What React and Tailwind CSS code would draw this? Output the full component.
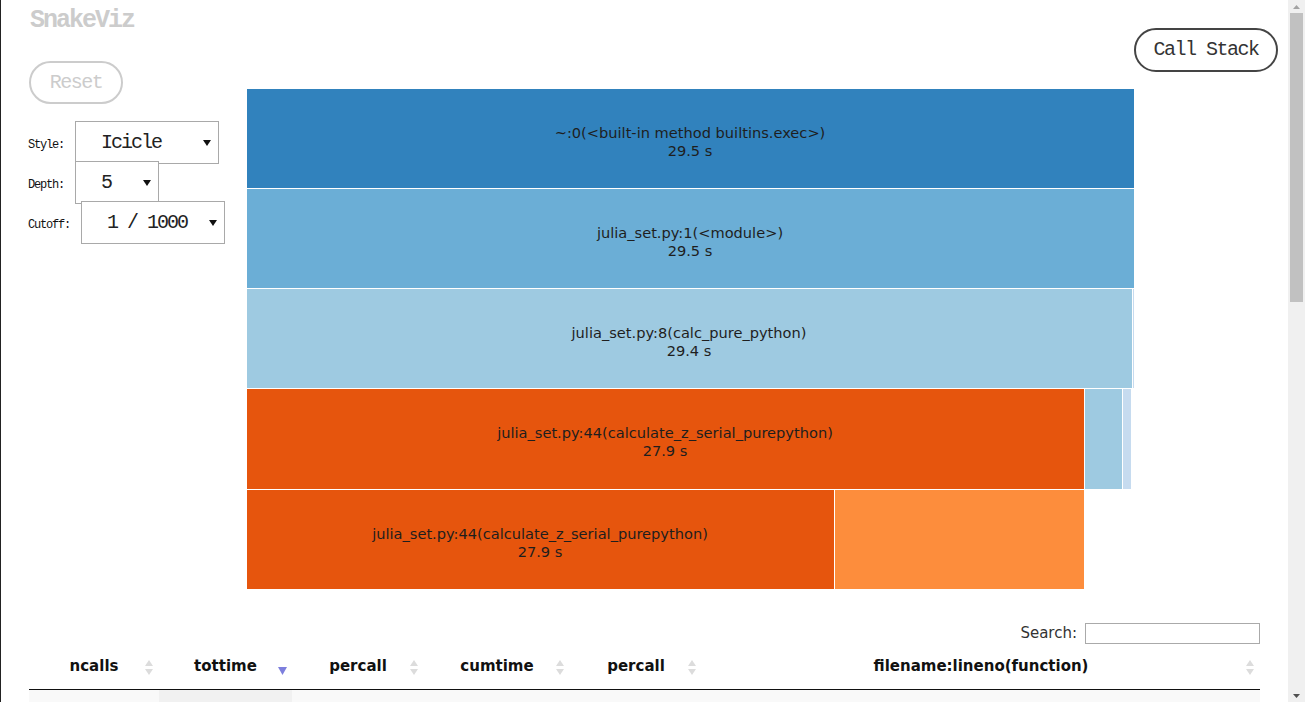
import React from 'react';

const MONO = { fontFamily: '"Liberation Mono", "DejaVu Sans Mono", monospace' };
const SANS = { fontFamily: '"DejaVu Sans", Verdana, sans-serif' };

// icicle blocks, coordinates relative to the chart origin
const BLOCKS = [
  { x: 0, y: 0, w: 888, h: 100, fill: '#3182bd', label: '~:0(<built-in method builtins.exec>)', time: '29.5 s' },
  { x: 0, y: 100, w: 888, h: 100, fill: '#6baed6', label: 'julia_set.py:1(<module>)', time: '29.5 s' },
  { x: 0, y: 200, w: 886, h: 100, fill: '#9ecae1', label: 'julia_set.py:8(calc_pure_python)', time: '29.4 s' },
  { x: 886, y: 200, w: 2, h: 100, fill: '#c6dbef' },
  { x: 0, y: 300, w: 838, h: 101, fill: '#e6550d', label: 'julia_set.py:44(calculate_z_serial_purepython)', time: '27.9 s' },
  { x: 838, y: 300, w: 38, h: 101, fill: '#9ecae1' },
  { x: 876, y: 300, w: 9, h: 101, fill: '#c6dbef' },
  { x: 0, y: 401, w: 588, h: 100, fill: '#e6550d', label: 'julia_set.py:44(calculate_z_serial_purepython)', time: '27.9 s' },
  { x: 588, y: 401, w: 250, h: 100, fill: '#fd8d3c' },
];

const COLUMNS = [
  { name: 'ncalls', w: 'w-[130px]' },
  { name: 'tottime', w: 'w-[133px]', active: true },
  { name: 'percall', w: 'w-[132px]' },
  { name: 'cumtime', w: 'w-[146px]' },
  { name: 'percall', w: 'w-[132px]' },
  { name: 'filename:lineno(function)', w: 'flex-1' },
];

function Caret() {
  return (
    <svg width="8" height="6" viewBox="0 0 8 6" className="shrink-0">
      <path d="M0 0 L8 0 L4 6 Z" fill="#111" />
    </svg>
  );
}

function FakeSelect({ value, width }) {
  return (
    <div
      className={`${width} h-[43px] border border-[#a9a9a9] bg-white flex items-center pl-[25px] pr-[7px]`}
    >
      <span className="flex-1 text-[20px] tracking-[-2px] text-[#222]" style={MONO}>
        {value}
      </span>
      <Caret />
    </div>
  );
}

function ControlRow({ label, value, width }) {
  return (
    <div className="flex items-center -mb-[3px]">
      <span className="text-[12px] tracking-[-1.2px] text-[#111] pt-[4px] mr-[11px]" style={MONO}>
        {label}
      </span>
      <FakeSelect value={value} width={width} />
    </div>
  );
}

function SortIcon({ active }) {
  if (active) {
    return (
      <svg width="9" height="16" viewBox="0 0 9 16" className="absolute right-[5px] top-[16px]">
        <path d="M0 7 L9 7 L4.5 15 Z" fill="#7d7fdd" />
      </svg>
    );
  }
  return (
    <svg width="8" height="16" viewBox="0 0 8 16" className="absolute right-[6px] top-[16px]">
      <path d="M0 6 L4 0 L8 6 Z" fill="#dcdcdc" />
      <path d="M0 9 L8 9 L4 15 Z" fill="#dcdcdc" />
    </svg>
  );
}

function Icicle() {
  return (
    <svg width="888" height="502" viewBox="0 0 888 502" style={SANS}>
      {BLOCKS.map((b, i) => (
        <g key={i}>
          <rect x={b.x + 0.5} y={b.y + 0.5} width={b.w} height={b.h} fill={b.fill} stroke="#fff" strokeWidth="1" />
          {b.label && (
            <text textAnchor="middle" fontSize="14.6" fill="#1e1e1e">
              <tspan x={b.x + b.w / 2} y={b.y + 49.5}>{b.label}</tspan>
              <tspan x={b.x + b.w / 2} y={b.y + 67.5}>{b.time}</tspan>
            </text>
          )}
        </g>
      ))}
    </svg>
  );
}

export default function App() {
  return (
    <div className="w-[1305px] h-[702px] overflow-hidden flex bg-white border-l border-[#222]">
      <div className="flex-1 flex flex-col">
        {/* top area: controls, icicle chart, call stack button */}
        <div className="flex">
          <div className="w-[245px] pl-[27px] flex flex-col items-start">
            <div className="pt-[2px] h-[61px] pl-[2px]">
              <h1 className="text-[25px] leading-[38px] font-bold tracking-[-2px] text-[#cccccc]" style={MONO}>
                SnakeViz
              </h1>
            </div>
            <button
              className="w-[94px] h-[43px] ml-[1px] rounded-full border-2 border-[#cccccc] text-[#cccccc] text-[20px] tracking-[-1.5px] bg-white"
              style={MONO}
            >
              Reset
            </button>
            <div className="mt-[17px] flex flex-col">
              <ControlRow label="Style:" value="Icicle" width="w-[144px]" />
              <ControlRow label="Depth:" value="5" width="w-[84px]" />
              <ControlRow label="Cutoff:" value="1 / 1000" width="w-[144px]" />
            </div>
          </div>
          <div className="pt-[88px]">
            <Icicle />
          </div>
          <div className="pt-[28px]">
            <button
              className="w-[144px] h-[44px] rounded-full border-2 border-[#444] text-[#333] text-[20px] tracking-[-1.5px] bg-white"
              style={MONO}
            >
              Call Stack
            </button>
          </div>
        </div>

        {/* stats table */}
        <div className="mt-[33px] pl-[28px] pr-[28px]" style={SANS}>
          <div className="flex justify-end items-center gap-[8px] h-[21px]">
            <span className="text-[15px] text-[#333]">Search:</span>
            <div className="w-[175px] h-[21px] border border-[#aaa] bg-white" />
          </div>
          <div className="flex h-[46px] border-b border-[#111]">
            {COLUMNS.map((c, i) => (
              <div key={i} className={`${c.w} relative flex items-center justify-center`}>
                <span className="text-[15px] font-bold text-[#111]">{c.name}</span>
                <SortIcon active={c.active} />
              </div>
            ))}
          </div>
          <div className="flex h-[37px] bg-[#f9f9f9]">
            {COLUMNS.map((c, i) => (
              <div key={i} className={`${c.w} ${c.active ? 'bg-[#f1f1f1]' : ''}`} />
            ))}
          </div>
        </div>
      </div>

      {/* scrollbar */}
      <div className="w-[17px] h-full bg-[#f0f0f0] flex flex-col items-center">
        <div className="h-[13px] flex items-center justify-center">
          <svg width="7" height="4" viewBox="0 0 7 4">
            <path d="M0 4 L3.5 0 L7 4 Z" fill="#a3a3a3" />
          </svg>
        </div>
        <div className="w-[13px] h-[289px] bg-[#c1c1c1]" />
        <div className="flex-1" />
        <div className="h-[13px] flex items-center justify-center">
          <svg width="7" height="4" viewBox="0 0 7 4">
            <path d="M0 0 L7 0 L3.5 4 Z" fill="#505050" />
          </svg>
        </div>
      </div>
    </div>
  );
}
